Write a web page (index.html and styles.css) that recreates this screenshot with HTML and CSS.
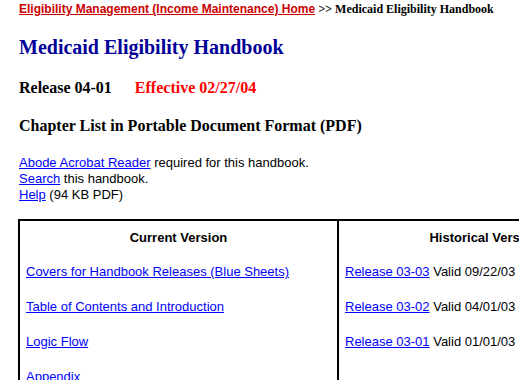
FILE: index.html
```html
<!DOCTYPE html>
<html lang="en">
<head>
  <meta charset="UTF-8" />
  <title>Medicaid Eligibility Handbook</title>
  <link rel="stylesheet" href="styles.css">
</head>
<body>
  <div class="crumbs">
    <a href="#" class="crumb-home">Eligibility Management (Income Maintenance) Home</a>
    <span class="crumb-here">&gt;&gt; Medicaid Eligibility Handbook</span>
  </div>

  <h1>Medicaid Eligibility Handbook</h1>

  <h2 class="release">Release 04-01 <span class="effective">Effective 02/27/04</span></h2>

  <h2 class="chapters">Chapter List in Portable Document Format (PDF)</h2>

  <p class="notes">
    <a href="#">Abode Acrobat Reader</a> required for this handbook.<br>
    <a href="#">Search</a> this handbook.<br>
    <a href="#">Help</a> (94 KB PDF)
  </p>

  <table class="versions">
    <tr>
      <th class="current">Current Version</th>
      <th class="history">Historical Versions</th>
    </tr>
    <tr>
      <td><a href="#">Covers for Handbook Releases (Blue Sheets)</a></td>
      <td><a href="#">Release 03-03</a> Valid 09/22/03 - 02/26/04</td>
    </tr>
    <tr>
      <td><a href="#">Table of Contents and Introduction</a></td>
      <td><a href="#">Release 03-02</a> Valid 04/01/03 - 09/21/03</td>
    </tr>
    <tr>
      <td><a href="#">Logic Flow</a></td>
      <td><a href="#">Release 03-01</a> Valid 01/01/03 - 03/31/03</td>
    </tr>
    <tr>
      <td><a href="#">Appendix</a></td>
      <td></td>
    </tr>
  </table>
</body>
</html>
```

FILE: styles.css
```css
body {
  margin: 0;
  padding: 2px 0 0 19px;
  background-color: #ffffff;
  color: #000000;
  font-family: "Liberation Sans", Arial, sans-serif;
  font-size: 13px;
  width: 900px;
}
a {
  color: #0000ff;
}
.crumbs {
  font-size: 12px;
  line-height: 15px;
  white-space: nowrap;
}
.crumb-home {
  color: #cc0000;
  font-weight: bold;
}
.crumb-here {
  font-family: "Liberation Serif", "Times New Roman", serif;
  font-weight: bold;
}
h1 {
  font-family: "Liberation Serif", "Times New Roman", serif;
  font-size: 20px;
  color: #000099;
  margin: 18px 0 0;
  line-height: 24px;
}
h2 {
  font-family: "Liberation Serif", "Times New Roman", serif;
  font-size: 16px;
  margin: 0;
  line-height: 19px;
}
.release {
  margin-top: 19px;
}
.effective {
  color: #ff0000;
  margin-left: 19px;
}
.chapters {
  margin-top: 19px;
}
.notes {
  margin: 20px 0 0;
  line-height: 16px;
}
.versions {
  margin-top: 16px;
  margin-left: -1px;
  border: 2px solid #000000;
  border-collapse: collapse;
}
.versions th,
.versions td {
  border-left: 2px solid #000000;
  text-align: left;
  padding: 0 6px;
  height: 35px;
  white-space: nowrap;
  vertical-align: middle;
}
.versions th {
  text-align: center;
  height: 33px;
}
.versions td:first-child {
  width: 305px;
}
.history {
  width: 286px;
}
```
